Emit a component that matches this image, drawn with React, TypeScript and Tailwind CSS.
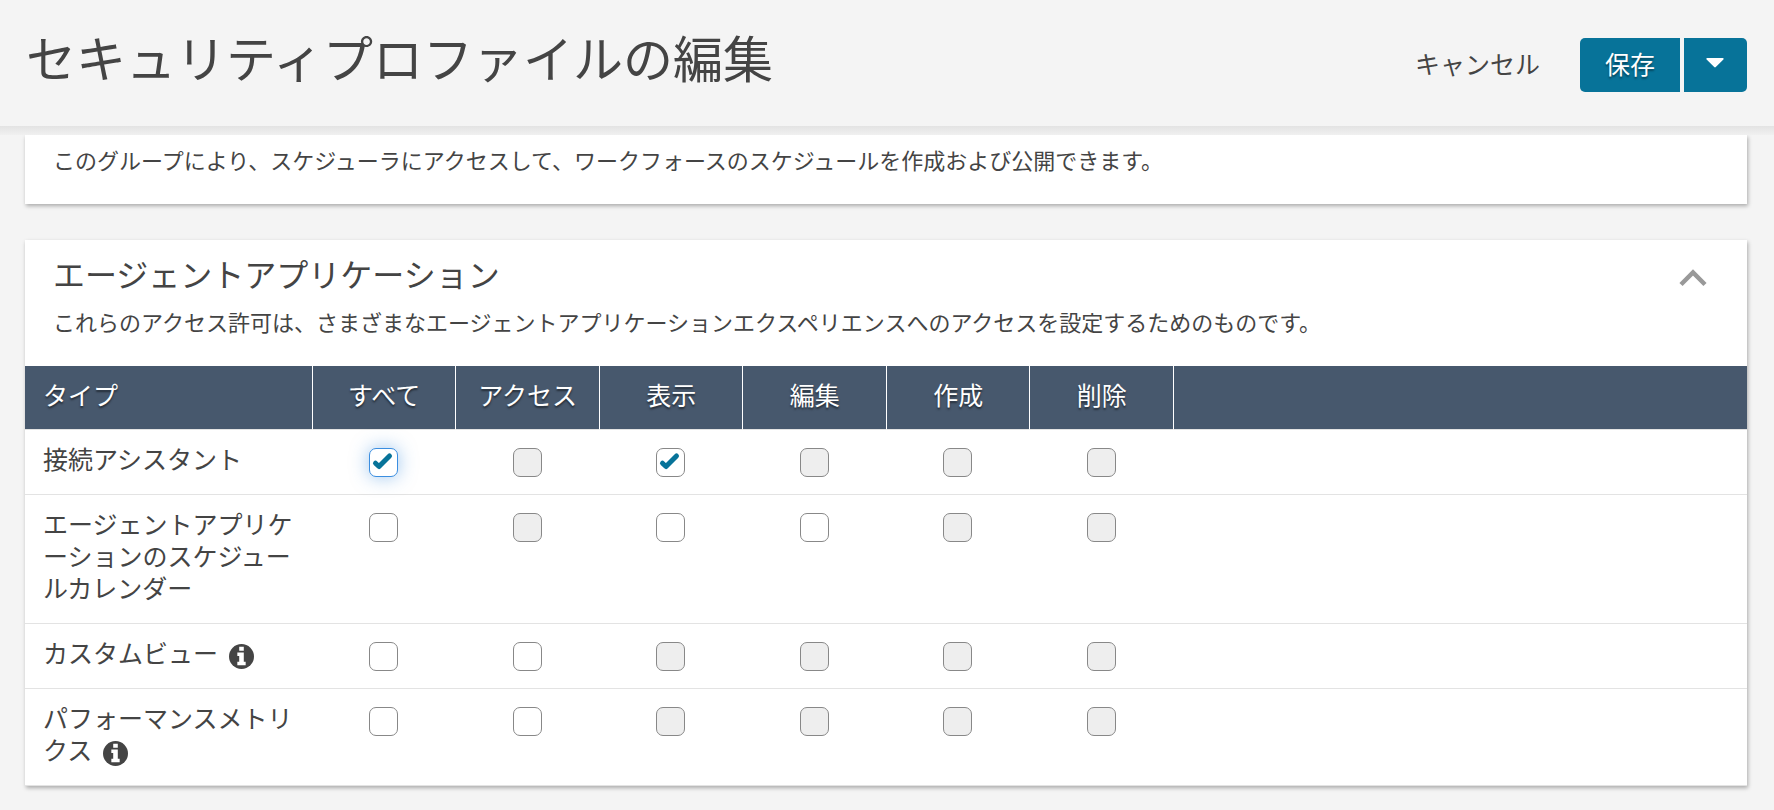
import { useState } from 'react'

const columns = ['すべて', 'アクセス', '表示', '編集', '作成', '削除']

// on = ticked, off = empty, na = not available for this type
type State = 'on' | 'off' | 'na'

const rows: { label: string; info?: boolean; cells: State[] }[] = [
  { label: '接続アシスタント', cells: ['on', 'na', 'on', 'na', 'na', 'na'] },
  { label: 'エージェントアプリケーションのスケジュールカレンダー', cells: ['off', 'na', 'off', 'off', 'na', 'na'] },
  { label: 'カスタムビュー', info: true, cells: ['off', 'off', 'na', 'na', 'na', 'na'] },
  { label: 'パフォーマンスメトリクス', info: true, cells: ['off', 'off', 'na', 'na', 'na', 'na'] },
]

// ── Icons ─────────────────────────────────────────────────────────────────

function InfoIcon() {
  return (
    <svg viewBox="0 0 24 24" className="-my-2 ml-[11px] inline-block size-[25px] align-middle" aria-hidden="true">
      <circle cx="12" cy="12" r="12" fill="#444" />
      <path d="M9.8 2.6h4.4v3.8H9.8zM8 8.2h6.2v8.8H16v3.4H8V17h1.8v-5.4H8z" fill="#fff" />
    </svg>
  )
}

// ── Checkbox ──────────────────────────────────────────────────────────────

function Checkbox({ label, state, focused }: { label: string; state: State; focused?: boolean }) {
  const [checked, setChecked] = useState(state === 'on')
  return (
    <span className="inline-grid align-top">
      <input
        type="checkbox"
        aria-label={label}
        checked={checked}
        disabled={state === 'na'}
        onChange={(e) => setChecked(e.target.checked)}
        className={`col-start-1 row-start-1 size-[29px] appearance-none rounded-[7px] border bg-white disabled:bg-[#eee] ${
          focused ? 'border-[#3b8ee0] shadow-[0_0_18px_rgba(59,142,224,0.5)]' : 'border-[#888]'
        }`}
      />
      {checked && (
        <svg viewBox="0 0 29 29" className="pointer-events-none col-start-1 row-start-1 size-[29px]" aria-hidden="true">
          <path d="M6.5 15.2L10 18.5L20.5 8" fill="none" stroke="#077399" strokeWidth="5" strokeLinecap="round" strokeLinejoin="round" />
        </svg>
      )}
    </span>
  )
}

// ── Header ────────────────────────────────────────────────────────────────

function PageHeader() {
  return (
    <header>
      <div className="flex h-[126px] items-start justify-between pl-[26px] pr-[27px]">
        <h1 className="pt-5 text-[50px] leading-[72px]">セキュリティプロファイルの編集</h1>
        <div className="flex items-center pt-[38px] text-[25px]">
          <button type="button" className="mr-10 pb-0.5">キャンセル</button>
          <div className="flex gap-1 text-white">
            <button
              type="button"
              className="h-[54px] w-[100px] rounded-l-[5px] bg-[#077399] pb-0.5 [text-shadow:0_2px_2px_rgba(0,0,0,0.4)]"
            >
              保存
            </button>
            <button
              type="button"
              aria-label="その他の保存オプション"
              className="flex h-[54px] w-[63px] items-center justify-center rounded-r-[5px] bg-[#077399] pb-1 pr-0.5"
            >
              <svg viewBox="0 0 18 10" className="h-[10px] w-[18px]" aria-hidden="true">
                <path d="M1.2 0H16.8C17.6 0 18 .9 17.4 1.5L9.8 9.1Q9 9.9 8.2 9.1L.6 1.5C0 .9.4 0 1.2 0z" fill="#fff" />
              </svg>
            </button>
          </div>
        </div>
      </div>
      <div className="h-[9px] bg-linear-to-b from-[#e3e3e3] to-[#f0f0f0]" />
    </header>
  )
}

// ── Permissions ───────────────────────────────────────────────────────────

function PermissionTable() {
  return (
    <table className="w-full table-fixed border-separate border-spacing-0 text-[25px] leading-8">
      <thead>
        <tr className="h-16 text-white [text-shadow:0_2px_2px_rgba(0,0,0,0.5)] [&>*]:border-b [&>*]:border-b-[#e3e3e3] [&>*]:bg-[#47586d] [&>*]:bg-clip-padding">
          <th scope="col" className="w-1/6 pb-2 pl-[18px] text-left font-normal">タイプ</th>
          {columns.map((column) => (
            <th key={column} scope="col" className="w-1/12 border-l border-l-white pb-2 text-center font-normal">
              {column}
            </th>
          ))}
          <td className="border-l border-l-white" />
        </tr>
      </thead>
      <tbody>
        {rows.map((row, r) => (
          <tr key={row.label} className="align-top [&>*]:border-b [&>*]:border-[#e3e3e3]">
            <th scope="row" className="break-all pb-5 pl-[18px] pr-4 pt-3 text-left font-normal">
              {row.label}
              {row.info && <InfoIcon />}
            </th>
            {row.cells.map((state, c) => (
              <td key={columns[c]} className="pb-4 pt-[18px] text-center leading-[0]">
                <Checkbox label={`${row.label} ${columns[c]}`} state={state} focused={r === 0 && c === 0} />
              </td>
            ))}
            <td />
          </tr>
        ))}
      </tbody>
    </table>
  )
}

export default function App() {
  return (
    <div className="min-h-screen bg-[#f4f4f4] font-['Noto_Sans_CJK_JP',sans-serif] text-[#444]">
      <PageHeader />
      <main className="pb-6 pl-[25px] pr-[27px]">
        <section className="mb-9 bg-white px-7 pb-[29px] pt-[9px] shadow-[1px_2px_4px_rgba(0,0,0,0.3)] [clip-path:inset(0_-8px_-8px_-8px)]">
          <p className="text-[22px] leading-[31px]">
            このグループにより、スケジューラにアクセスして、ワークフォースのスケジュールを作成および公開できます。
          </p>
        </section>

        <section className="bg-white shadow-[1px_2px_4px_rgba(0,0,0,0.3)]">
          <div className="flex items-start justify-between pb-7 pl-7 pr-10 pt-[11px]">
            <div>
              <h2 className="text-[32px] leading-[44px]">エージェントアプリケーション</h2>
              <p className="pb-px pt-[10px] text-[22px] leading-8">
                これらのアクセス許可は、さまざまなエージェントアプリケーションエクスペリエンスへのアクセスを設定するためのものです。
              </p>
            </div>
            <button type="button" aria-label="折りたたむ" className="pt-[18px]">
              <svg viewBox="0 0 28 18" className="h-[18px] w-7" aria-hidden="true">
                <path d="M2 15.5L14 3.5L26 15.5" fill="none" stroke="#999" strokeWidth="4.5" />
              </svg>
            </button>
          </div>
          <PermissionTable />
        </section>
      </main>
    </div>
  )
}
